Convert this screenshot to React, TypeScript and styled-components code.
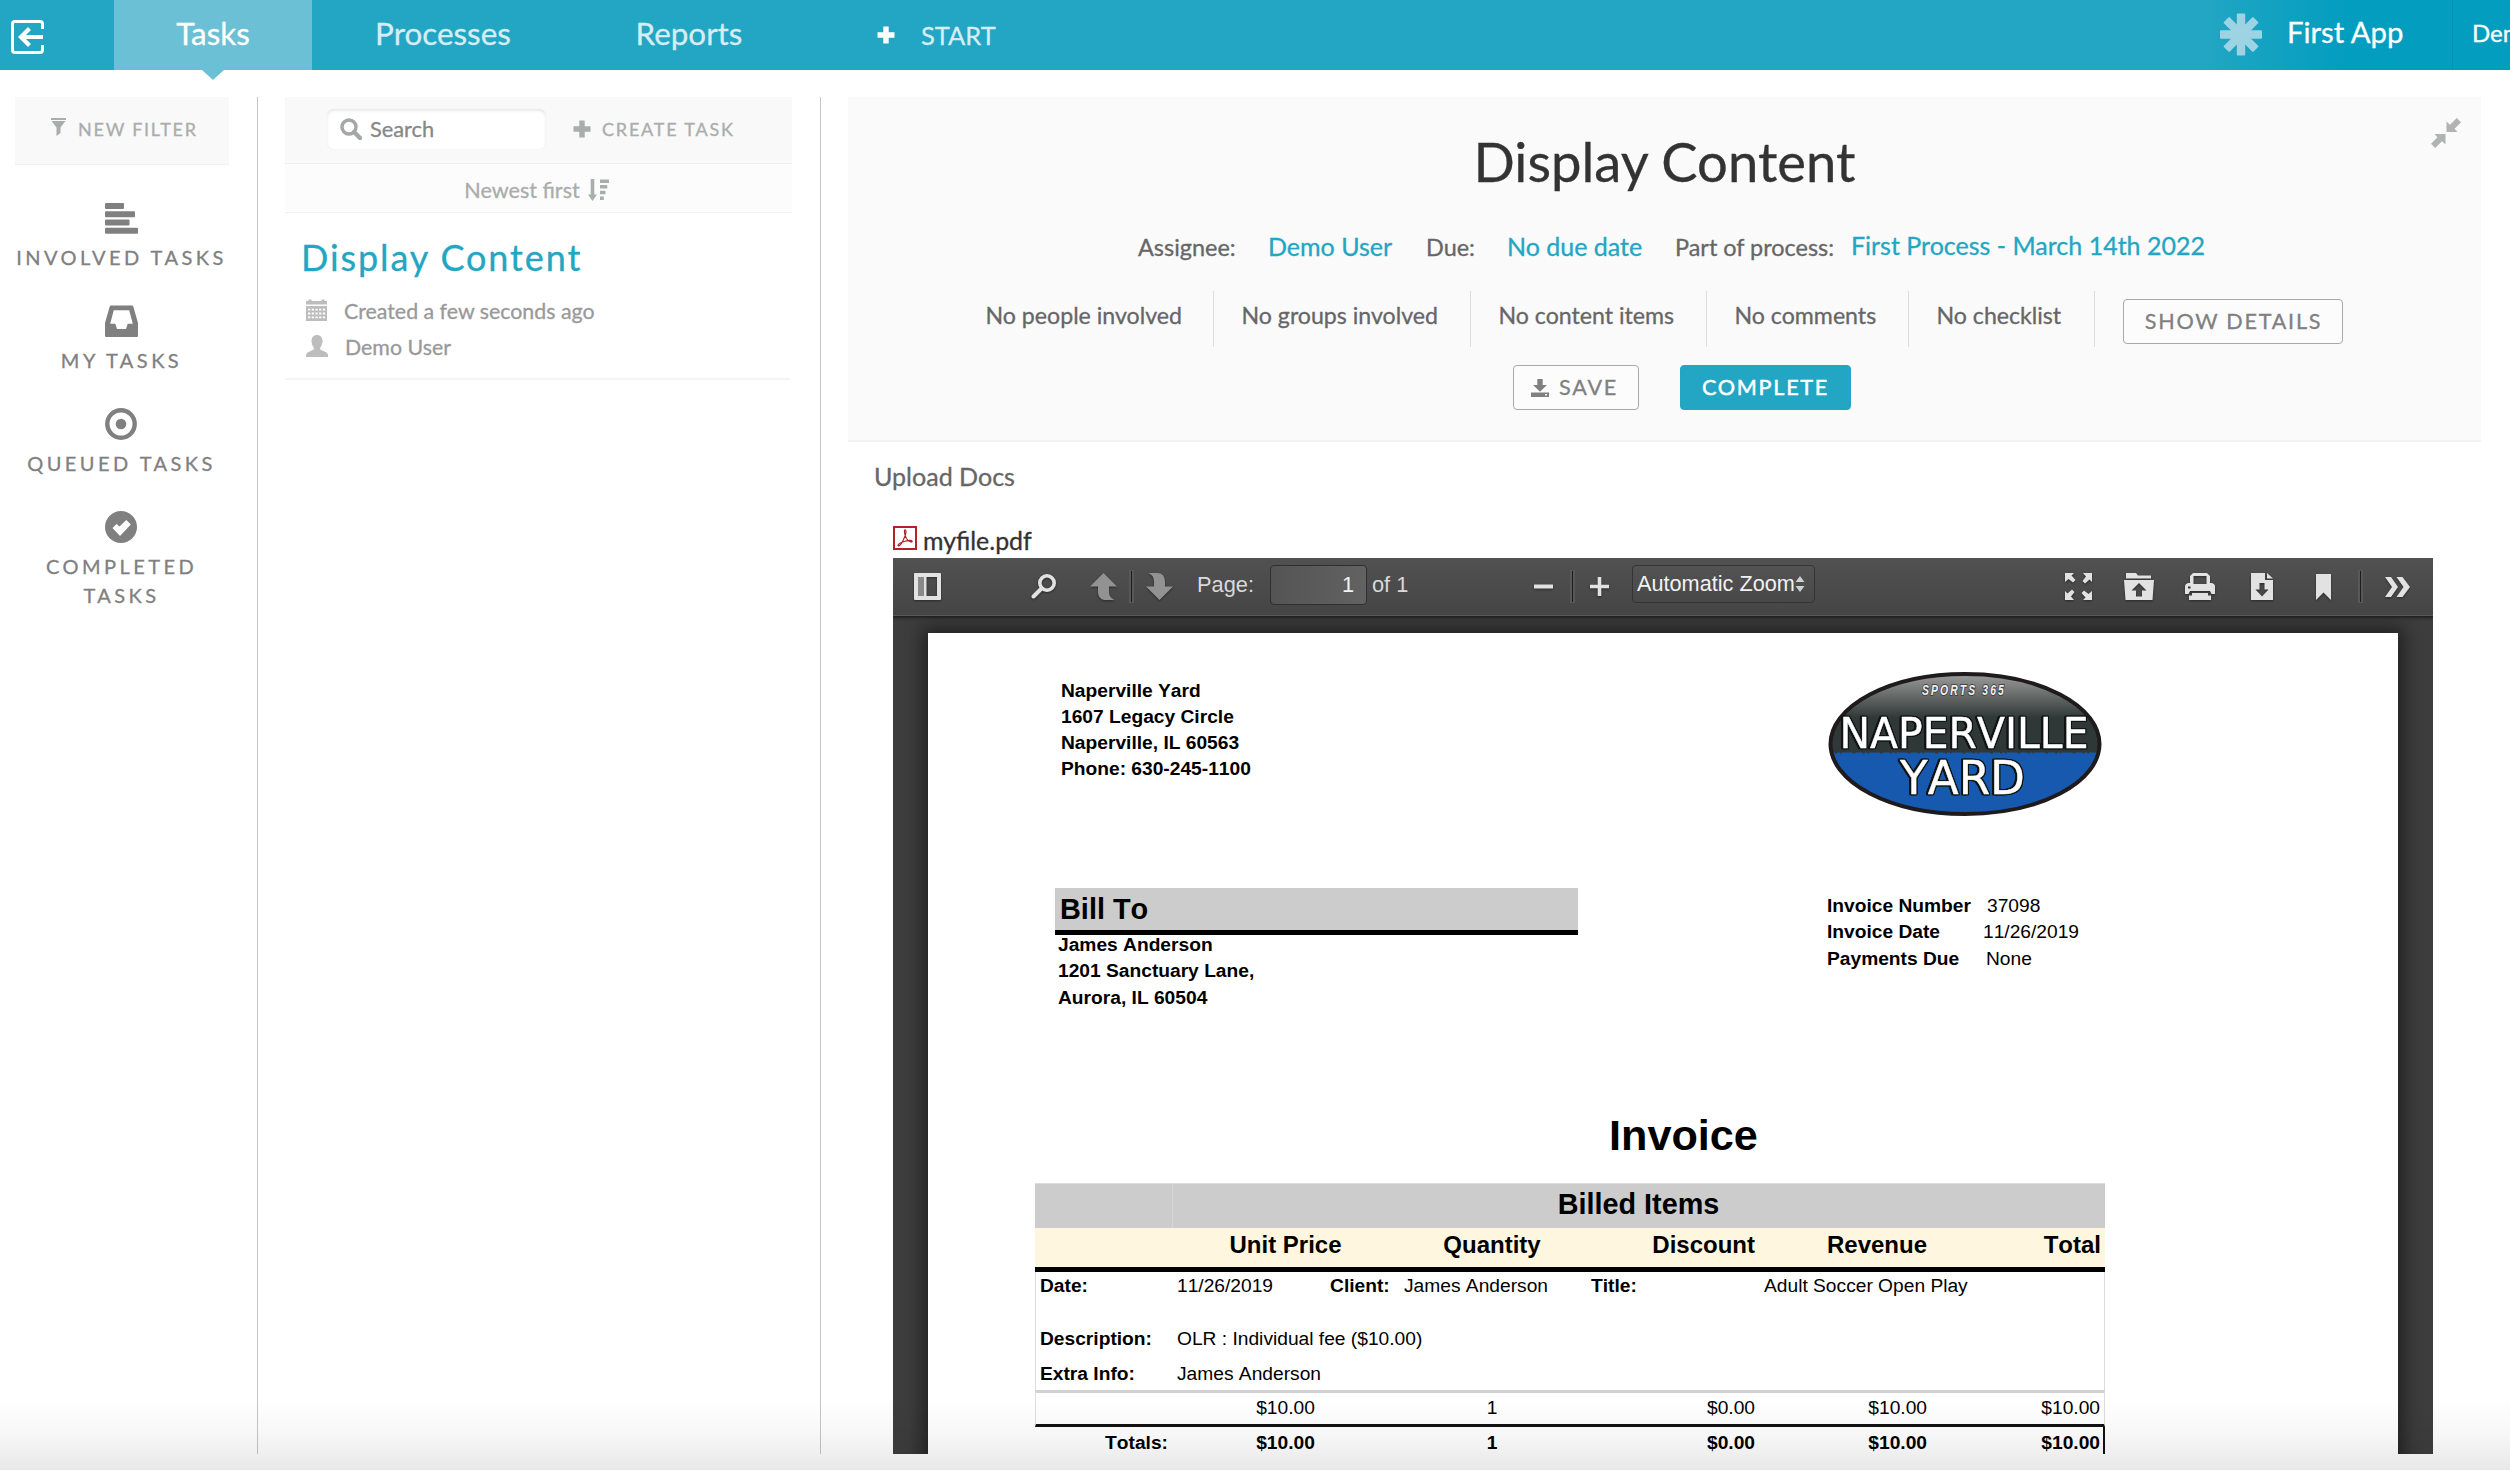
import React from 'react';
import styled, { createGlobalStyle, css } from 'styled-components';

const GlobalStyle = createGlobalStyle`
  *, *::before, *::after { box-sizing: border-box; }
  html, body { margin: 0; padding: 0; background: #fff; overflow: hidden; }
  body { font-family: Lato, "Open Sans", sans-serif; color: #333; }
`;

const teal = '#22a6c3';

const Screen = styled.div`
  position: relative;
  width: 2510px;
  height: 1470px;
  display: flex;
  flex-direction: column;
  overflow: hidden;
  -webkit-text-stroke: 0.3px currentColor;
`;

const BottomShade = styled.div`
  position: absolute;
  left: 0;
  right: 0;
  bottom: 0;
  height: 72px;
  pointer-events: none;
  background: linear-gradient(rgba(0, 0, 0, 0), rgba(0, 0, 0, 0.03) 50%, rgba(0, 0, 0, 0.09));
`;

/* ---------- top navigation ---------- */

const TopBar = styled.header`
  flex: none;
  height: 70px;
  display: flex;
  background: ${teal};
`;

const HomeLink = styled.a`
  width: 114px;
  padding: 20px 0 0 11px;
  color: #fff;
`;

const NavTab = styled.a<{ $width: number; $active?: boolean }>`
  position: relative;
  width: ${p => p.$width}px;
  height: 70px;
  line-height: 67px;
  text-align: center;
  font-size: 31.4px;
  color: ${p => (p.$active ? '#fff' : '#d5edf3')};
  background: ${p => (p.$active ? '#6bc0d5' : 'transparent')};
  ${p => p.$active && css`
    &::after {
      content: '';
      position: absolute;
      left: 50%;
      top: 100%;
      margin-left: -11px;
      border: 11px solid transparent;
      border-bottom: 0;
      border-top-color: #6bc0d5;
      border-top-width: 10px;
    }
  `}
`;

const StartLink = styled.a`
  display: flex;
  align-items: center;
  gap: 26px;
  margin-left: 73px;
  height: 70px;
  color: #fff;
  font-size: 25.5px;
  span { color: #d5edf3; }
`;

const AppBadge = styled.div`
  display: flex;
  align-items: center;
  margin-left: auto;
  width: 248px;
  padding: 0 0 2px 15px;
  background: linear-gradient(90deg, ${teal}, #039dc0 56%);
  border-right: 1px solid #0691b4;
`;

const AppName = styled.span`
  margin-left: 25px;
  font-size: 29.3px;
  line-height: 64px;
  height: 68px;
  color: #fff;
`;

const UserMenu = styled.div`
  width: 57px;
  padding-left: 19px;
  background: #039dc0;
  color: #fff;
  font-size: 24px;
  line-height: 66px;
  white-space: nowrap;
  overflow: hidden;
`;

/* ---------- columns ---------- */

const Columns = styled.div`
  height: 1384px;
  display: flex;
  padding-top: 27px;
`;

const FilterColumn = styled.nav`
  width: 258px;
  padding-left: 15px;
  border-right: 1.5px solid #c6c6c6;
`;

const NewFilter = styled.button`
  display: flex;
  align-items: center;
  width: 214px;
  height: 68px;
  padding: 0 0 4px 36px;
  border: 0;
  border-bottom: 1.5px solid #f0f0f0;
  background: #f9f9f9;
  font: 18px Lato, sans-serif;
  letter-spacing: 1.75px;
  color: #a9adac;
  svg { margin: -3px 12px 0 0; }
`;

const FilterList = styled.ul`
  list-style: none;
  margin: 0;
  padding: 37px 0 0;
  width: 212px;
`;

const FilterItem = styled.li`
  height: 103px;
  display: flex;
  flex-direction: column;
  align-items: center;
  color: #808080;
  svg { flex: none; height: 32px; }
`;

const FilterLabel = styled.span`
  margin-top: 9px;
  width: 220px;
  padding-left: 1px;
  text-align: center;
  font-size: 20px;
  line-height: 29px;
  letter-spacing: 3.45px;
`;

const TaskColumn = styled.section`
  width: 563px;
  padding-left: 27px;
  border-right: 1.5px solid #c6c6c6;
`;

const TaskTools = styled.div`
  display: flex;
  align-items: center;
  width: 507px;
  height: 67px;
  padding: 0 0 2px 42px;
  background: #f9f9f9;
  border-bottom: 1.5px solid #f0f0f0;
`;

const SearchBox = styled.label`
  display: flex;
  align-items: center;
  width: 219px;
  height: 40px;
  padding: 0 0 1px 13px;
  border-radius: 7px;
  background: #fff;
  box-shadow: inset 0 2px 3px rgba(0, 0, 0, 0.09), 0 0 1px rgba(0, 0, 0, 0.08);
  color: #a3a7a6;
`;

const SearchInput = styled.input`
  width: 150px;
  margin-left: 8px;
  padding: 0;
  border: 0;
  background: transparent;
  font: 21.8px Lato, sans-serif;
  &::placeholder { color: #888; opacity: 1; }
`;

const CreateTask = styled.button`
  display: flex;
  align-items: center;
  gap: 11px;
  margin-left: 27px;
  padding: 0;
  border: 0;
  background: none;
  font: 18px Lato, sans-serif;
  letter-spacing: 1.8px;
  color: #a9adac;
`;

const SortBar = styled.div`
  display: flex;
  align-items: center;
  justify-content: center;
  gap: 8px;
  width: 507px;
  height: 49px;
  padding: 3px 4px 0 0;
  background: #fcfcfc;
  border-bottom: 1.5px solid #f0f0f0;
  font-size: 21.6px;
  color: #a9adac;
`;

const TaskCard = styled.article`
  width: 505px;
  height: 167px;
  padding: 24px 0 0 16px;
  border-bottom: 2px solid #f4f4f4;
`;

const TaskTitle = styled.h3`
  margin: 0 0 16px;
  font-weight: 400;
  font-size: 36px;
  line-height: 40px;
  letter-spacing: 1.9px;
  color: ${teal};
`;

const TaskMeta = styled.p`
  display: flex;
  align-items: center;
  margin: 0;
  padding-left: 5px;
  height: 36px;
  font-size: 21.35px;
  color: #999;
  svg { color: #bdbdbd; margin: -3px 17px 0 0; }
`;

/* ---------- task detail ---------- */

const Detail = styled.main`
  flex: 1;
  padding-left: 27px;
`;

const DetailHeader = styled.div`
  position: relative;
  display: flex;
  flex-direction: column;
  align-items: center;
  width: 1633px;
  height: 345px;
  padding-top: 28px;
  background: #fafafa;
  border-bottom: 2px solid #f3f3f3;
`;

const CollapseButton = styled.span`
  position: absolute;
  top: 21px;
  right: 20px;
  color: #b0b3b2;
  display: flex;
`;

const DetailTitle = styled.h2`
  margin: 0;
  font-weight: 400;
  font-size: 54.4px;
  line-height: 72px;
  color: #333;
`;

const FactRow = styled.div`
  display: flex;
  margin-top: 32px;
  margin-left: 12px;
  width: 1065px;
  height: 36px;
`;

const FactLabel = styled.span<{ $width: number }>`
  width: ${p => p.$width}px;
  font-size: 23.45px;
  line-height: 37px;
  color: #666;
  white-space: nowrap;
`;

const FactLink = styled.a<{ $width: number; $raise?: number }>`
  width: ${p => p.$width}px;
  font-size: 25px;
  line-height: ${p => 35 - (p.$raise ?? 0)}px;
  color: ${teal};
  white-space: nowrap;
`;

const StatRow = styled.div`
  display: flex;
  margin-top: 26px;
  margin-left: -28px;
  height: 56px;
`;

const Stat = styled.span<{ $width: number }>`
  width: ${p => p.$width}px;
  padding-left: 27.5px;
  border-right: 1.5px solid #dcdcdc;
  font-size: 23.15px;
  line-height: 49px;
  color: #666;
  white-space: nowrap;
`;

const Button = styled.button<{ $primary?: boolean; $width: number }>`
  display: flex;
  align-items: center;
  justify-content: center;
  width: ${p => p.$width}px;
  height: 45px;
  padding: 0 0 1px 1px;
  border: 1.5px solid ${p => (p.$primary ? teal : '#a9a9a9')};
  border-radius: 4px;
  background: ${p => (p.$primary ? teal : '#fcfcfc')};
  color: ${p => (p.$primary ? '#fff' : '#808080')};
  font: 21.6px Lato, sans-serif;
  letter-spacing: 1.75px;
  -webkit-text-stroke: ${p => (p.$primary ? '0.5px #fff' : '0.3px #808080')};
  svg { margin: 1px 10px 0 -3px; }
`;

const DetailsButton = styled(Button)`
  margin: 8px 0 0 28px;
`;

const ActionRow = styled.div`
  display: flex;
  gap: 41px;
  margin-top: 18px;
  margin-left: 34px;
`;

const FieldLabel = styled.div`
  padding: 16px 0 0 26px;
  font-size: 25.05px;
  line-height: 36px;
  color: #666;
`;

const FileLink = styled.a`
  display: flex;
  align-items: center;
  gap: 6px;
  height: 32px;
  margin: 32px 0 0 45px;
  font-size: 24.9px;
  line-height: 28px;
  color: #333;
  padding-bottom: 5px;
  svg { margin-top: -4px; }
`;

/* ---------- document viewer ---------- */

const Viewer = styled.section`
  width: 1540px;
  height: 896px;
  margin: 0 0 0 45px;
  overflow: hidden;
  background: #3d3d3d;
  font-family: "Liberation Sans", Arial, sans-serif;
  -webkit-text-stroke: 0;
`;

const ViewerBar = styled.div`
  position: relative;
  display: flex;
  align-items: center;
  height: 58px;
  padding: 0 23px 0 21px;
  background: linear-gradient(#515151, #454545);
  border-bottom: 1px solid #585858;
  box-shadow: 0 1px 1px #222, 0 2px 3px rgba(0, 0, 0, 0.4);
  color: #ddd;
`;

const Slot = styled.span<{ $width: number; $dim?: boolean }>`
  display: flex;
  width: ${p => p.$width}px;
  color: ${p => (p.$dim ? '#929292' : '#e2e2e2')};
  svg { filter: drop-shadow(0 1px 1px rgba(0, 0, 0, 0.45)); }
`;

const Separator = styled.i<{ $after: number }>`
  width: 5px;
  height: 33px;
  margin-right: ${p => p.$after}px;
  border: solid #585858;
  border-width: 1px 2px;
  background: #1c1c1c;
`;

const BarText = styled.span<{ $width: number }>`
  width: ${p => p.$width}px;
  font-size: 21.8px;
  line-height: 30px;
  padding-bottom: 3px;
  color: #d9d9d9;
  white-space: nowrap;
`;

const PageInput = styled.input`
  width: 97px;
  height: 40px;
  margin: -3px 5px 0 0;
  padding: 0 12px 0 0;
  border: 1.5px solid #2f2f2f;
  border-radius: 4px;
  background: linear-gradient(90deg, #545454, #626262);
  font: 21.8px "Liberation Sans", Arial, sans-serif;
  text-align: right;
  color: #f2f2f2;
`;

const ZoomSelect = styled.div`
  display: flex;
  align-items: center;
  width: 183px;
  height: 38px;
  margin: -5px 0 0 0;
  padding: 0 0 0 4px;
  border: 1.5px solid #343434;
  border-radius: 4px;
  background: linear-gradient(#535353, #484848);
  font-size: 21.7px;
  color: #f2f2f2;
  white-space: nowrap;
`;

const RightTools = styled.div`
  display: flex;
  align-items: center;
  margin-left: auto;
`;

const Sheet = styled.div`
  width: 1470px;
  height: 840px;
  margin: 17px 0 0 35px;
  padding: 38px 0 0 107px;
  background: #fff;
  box-shadow: 0 0 16px 6px rgba(0, 0, 0, 0.45);
  color: #000;
  font-size: 19.2px;
  font-kerning: none;
`;

const SheetTop = styled.div`
  display: flex;
  height: 217px;
  svg { margin-top: 1px; }
`;

const Sender = styled.address`
  width: 793px;
  padding: 7px 0 0 26px;
  font-style: normal;
  font-weight: 700;
  line-height: 26.1px;
`;

const Parties = styled.div`
  display: flex;
  height: 221px;
`;

const BillTo = styled.div`
  width: 523px;
  margin: 0 249px 0 20px;
  font-weight: 700;
  line-height: 26.4px;
`;

const BillHeading = styled.h4`
  margin: 0 0 -3px;
  height: 47px;
  padding-left: 5px;
  font-size: 28.9px;
  line-height: 42px;
  background: #ccc;
  border-bottom: 5px solid #000;
`;

const BillLine = styled.div`
  padding-left: 3px;
`;

const InvoiceFacts = styled.div`
  padding-top: 4.5px;
  line-height: 26.7px;
`;

const InvoiceFact = styled.div<{ $gap: number }>`
  display: flex;
  b { width: ${p => p.$gap}px; }
`;

const InvoiceTitle = styled.h1`
  margin: 0;
  width: 1297px;
  height: 74px;
  text-align: center;
  font-size: 43.2px;
  line-height: 53px;
`;

const Table = styled.div`
  width: 1070px;
`;

const BilledHead = styled.div`
  height: 45px;
  display: flex;
  background: #ccc;
  border-top: 1.5px solid #ddd;
  font-size: 28.8px;
  font-weight: 700;
  line-height: 41px;
  text-align: center;
`;

const BilledSpacer = styled.span`
  width: 138px;
  border-right: 1.5px solid #d6d6d6;
`;

const BilledTitle = styled.span`
  width: 931px;
`;

const grid = css`
  display: grid;
  grid-template-columns: 137px 227px 186px 174px 172px 174px;
`;

const ColumnHead = styled.div`
  ${grid}
  height: 44px;
  background: #fff6df;
  border-bottom: 5px solid #000;
  font-size: 24px;
  font-weight: 700;
  line-height: 33px;
`;

const Cell = styled.span<{ $align?: 'center' | 'right' | 'left'; $pad?: number }>`
  text-align: ${p => p.$align ?? 'left'};
  padding: 0 ${p => (p.$align === 'right' ? p.$pad ?? 4 : 0)}px 0 ${p => (p.$align ? 0 : p.$pad ?? 5)}px;
  white-space: nowrap;
`;

const ClientLabel = styled.b`
  margin-left: 57px;
`;

const DetailsBlock = styled.div`
  border: 1.5px solid #dcdcdc;
  border-width: 0 1.5px;
`;

const DetailLine = styled.div<{ $height: number }>`
  ${grid}
  height: ${p => p.$height}px;
  margin: 0 -1px;
  line-height: 27px;
`;

const AmountRow = styled.div`
  ${grid}
  grid-template-columns: 136px 227px 186px 174px 172px 173px;
  height: 37px;
  border: solid #dcdcdc;
  border-width: 0 1px 3px;
  border-bottom-color: #111;
  border-top: 3px solid #d2d2d2;
  line-height: 30px;
`;

const TotalRow = styled.div`
  ${grid}
  height: 40px;
  border-right: 2px solid #111;
  line-height: 32px;
  font-weight: 700;
`;

/* ---------- icons ---------- */

type IconProps = { w: number; h: number; box: string; children: React.ReactNode };
const Icon = ({ w, h, box, children }: IconProps) => (
  <svg width={w} height={h} viewBox={box} fill="currentColor" preserveAspectRatio="none">{children}</svg>
);

const HomeIcon = () => (
  <Icon w={33} h={34} box="0 0 33 34">
    <path d="M31.500 9V4Q31.500 1.500 29 1.500H4Q1.500 1.500 1.500 4V30Q1.500 32.500 4 32.500H29Q31.500 32.500 31.500 30V25" fill="none" stroke="#fff" strokeWidth="3" />
    <path d="M32 17H12M18.500 8.500L10 17L18.500 25.500" fill="none" stroke="#fff" strokeWidth="4.200" />
  </Icon>
);
const PlusIcon = ({ size }: { size: number }) => (
  <Icon w={size} h={size} box="0 0 18 18"><path d="M6.300 0.500h5.400v5.800h5.800v5.400h-5.800v5.800H6.300v-5.800H0.500V6.300h5.800z" /></Icon>
);
const Asterisk = () => (
  <Icon w={42} h={43} box="-21 -21.500 42 43">
    <g fill="#9dd3e2">
      {[0, 45, 90, 135].map(a => <rect key={a} x="-4.200" y="-21" width="8.400" height="42" rx="1" transform={`rotate(${a})`} />)}
    </g>
  </Icon>
);
const Funnel = () => (
  <Icon w={15} h={18} box="0 0 15 18"><path d="M0 0h15v2H0zM0.500 3h14L9.500 9.500V15L5.500 18V9.500z" /></Icon>
);
const BarsIcon = () => (
  <Icon w={33} h={32} box="0 0 33 32">
    <rect y="1" width="19" height="6" rx="1" /><rect y="9.300" width="30" height="6" rx="1" />
    <rect y="17.500" width="24.500" height="6" rx="1" /><rect y="25.700" width="33" height="6" rx="1" />
  </Icon>
);
const InboxIcon = () => (
  <Icon w={33} h={32} box="0 0 33 34">
    <path fillRule="evenodd" d="M6 0.500H27Q28 0.500 28.300 1.500L33 19V33Q33 34 32 34H1Q0 34 0 33V19L4.700 1.500Q5 0.500 6 0.500zM8.800 5.500L5.200 20H10.300L12 25.500H21L22.700 20H27.800L24.200 5.500z" />
  </Icon>
);
const TargetIcon = () => (
  <Icon w={32} h={32} box="0 0 32 32">
    <circle cx="16" cy="16" r="13.700" fill="none" stroke="currentColor" strokeWidth="4.400" /><circle cx="16" cy="16" r="5.300" />
  </Icon>
);
const CheckIcon = () => (
  <Icon w={32} h={32} box="0 0 32 32">
    <circle cx="16" cy="16" r="16" />
    <path fill="#fff" d="M7.500 17L11.500 13L14.500 15.500L21.300 9L25.800 13.600L15 25z" />
  </Icon>
);
const Magnifier = () => (
  <Icon w={22} h={22} box="0 0 22 22">
    <circle cx="9" cy="9" r="7" fill="none" stroke="currentColor" strokeWidth="3.400" />
    <path d="M14 14L20 20" stroke="currentColor" strokeWidth="4.400" strokeLinecap="round" />
  </Icon>
);
const SortIcon = () => (
  <Icon w={21} h={22} box="0 0 21 22">
    <path d="M2.700 0h3.600v15.500H9L4.500 22L0 15.500h2.700zM12 0.500h9v3.400h-9zM12 6h7.300v3.400H12zM12 11.800h5.500v3.400H12zM12 17.500h3.800v3.400H12z" />
  </Icon>
);
const Calendar = () => (
  <Icon w={21} h={22} box="0 0 21 22">
    <path fillRule="evenodd" d="M0 2h2.500V0.500h3V2h10V0.500h3V2H21v3.400H0zM0 7h21v15H0zM2 9.800v1.800h2.300v-1.800zM5.700 9.800v1.800h2.300v-1.800zM9.400 9.800v1.800h2.300v-1.800zM13.100 9.800v1.800h2.300v-1.800zM16.800 9.800v1.800h2.300v-1.800zM2 13.600v1.800h2.300v-1.800zM5.700 13.600v1.800h2.300v-1.800zM9.400 13.600v1.800h2.300v-1.800zM13.100 13.600v1.800h2.300v-1.800zM16.800 13.600v1.800h2.300v-1.800zM2 17.400v1.800h2.300v-1.800zM5.700 17.400v1.800h2.300v-1.800zM9.400 17.400v1.800h2.300v-1.800zM13.100 17.400v1.800h2.300v-1.800zM16.800 17.400v1.800h2.300v-1.800z" />
  </Icon>
);
const Person = () => (
  <Icon w={22} h={22} box="0 0 22 22">
    <path d="M11 0C14.500 0 16.500 2.600 16.500 6C16.500 8.500 15.500 11 14.200 12.500V14.500L20.500 17.500Q22 18.500 22 20V22H0V20Q0 18.500 1.500 17.500L7.800 14.500V12.500C6.500 11 5.500 8.500 5.500 6C5.500 2.600 7.500 0 11 0z" />
  </Icon>
);
const Collapse = () => (
  <Icon w={30} h={30} box="0 0 30 30">
    <path d="M25.800 0L30 4.200L23.500 10.700L26.500 14H15.500V3.500L19 6.800zM4.200 30L0 25.800L6.500 19.300L3.500 16H14.500V26.500L11 23.200z" />
  </Icon>
);
const SaveIcon = () => (
  <Icon w={18} h={18} box="0 0 18 18">
    <path fillRule="evenodd" d="M6.300 0h5.400v6H16L9 12.800L2 6h4.300zM0 13.500h18V18H0zM14 15v1.500h2V15z" />
  </Icon>
);
const PdfIcon = () => (
  <svg width="24" height="24" viewBox="0 0 24 24" fill="none" stroke="#b5202a">
    <rect x="1" y="1" width="22" height="22" strokeWidth="2" />
    <path strokeWidth="1.200" d="M11.800 3.800C13.400 3.600 13.200 7 12 10C10.500 14 7.500 19.500 5.500 20C4 19.500 6 17.300 9 16.300C13 14.800 18.500 13.700 19.200 15.200C19.500 17 15.500 15.500 13.500 12.500C12 10 10.800 5 11.800 3.800z" />
  </svg>
);
const SidebarIcon = () => (
  <Icon w={27} h={27} box="0 0 27 27">
    <path fillRule="evenodd" d="M1 0H26Q27 0 27 1V26Q27 27 26 27H1Q0 27 0 26V1Q0 0 1 0zM12.500 4V23H23V4zM4 4V23H10V4z" />
    <rect x="4" y="4" width="6" height="19" fill="#8a8a8a" />
  </Icon>
);
const FindIcon = () => (
  <Icon w={25} h={25} box="0 0 25 25">
    <circle cx="16" cy="9" r="7.200" fill="none" stroke="currentColor" strokeWidth="3.600" />
    <path d="M10.500 14.500L2.500 22.500" stroke="currentColor" strokeWidth="4" strokeLinecap="round" />
  </Icon>
);
const PageUp = () => (
  <Icon w={27} h={27} box="0 0 27 27"><path d="M13.500 0L27 13.500H19V19Q19 24.500 24.500 27H14Q8 25.500 8 19V13.500H0z" /></Icon>
);
const PageDown = () => (
  <Icon w={27} h={27} box="0 0 27 27"><path d="M13.500 27L27 13.500H19V9Q19 0.500 12 0H2.500Q8 2.500 8 8V13.500H0z" /></Icon>
);
const ZoomOutIcon = () => <Icon w={19} h={19} box="0 0 19 19"><rect y="7.500" width="19" height="4" /></Icon>;
const ZoomInIcon = () => <Icon w={19} h={19} box="0 0 19 19"><path d="M7.700 0h3.600v7.700H19v3.600h-7.700V19H7.700v-7.700H0V7.700h7.700z" /></Icon>;
const SelectArrows = () => <Icon w={10} h={16} box="0 0 10 16"><path d="M5 0L9.500 6H0.500zM5 16L9.500 10H0.500z" fill="#cfcfcf" /></Icon>;
const FullscreenIcon = () => (
  <Icon w={27} h={27} box="0 0 27 27">
    {[0, 90, 180, 270].map(a => (
      <path key={a} transform={`rotate(${a} 13.500 13.500)`} d="M0 0H9L6.500 2.500L10.500 7L8 9.500L3.500 6L0 9z" />
    ))}
  </Icon>
);
const OpenIcon = () => (
  <Icon w={30} h={27} box="0 0 30 27">
    <path fillRule="evenodd" d="M2 0H12L14 2.500H27V5.500H2zM0 7H30L28.500 27H1.500zM15 10L7.500 17.500H12V23.500H18V17.500H22.500z" />
  </Icon>
);
const PrintIcon = () => (
  <Icon w={30} h={27} box="0 0 30 27">
    <path fillRule="evenodd" d="M8 0H22L25 3V10H27Q30 11 30 13V21H26.500L25 18H5L3.500 21H0V13Q0 11 3 10H5V3zM8.500 3V11H21.500V3zM3 13.500V15.500H5.500V13.500z" />
    <path d="M7 20H23V22.500H26V27H4V22.500H7z" />
  </Icon>
);
const DownloadIcon = () => (
  <Icon w={22} h={27} box="0 0 22 27">
    <path fillRule="evenodd" d="M0 0H14V7H22V27H0zM8.500 10V16.500H4.500L11 23.500L17.500 16.500H13.500V10zM16 0L22 5.500H16z" />
  </Icon>
);
const BookmarkIcon = () => <Icon w={15} h={26} box="0 0 15 26"><path d="M0 0H15V26L7.500 18.500L0 26z" /></Icon>;
const MoreIcon = () => (
  <Icon w={25} h={20} box="0 0 25 20"><path d="M0 0H6L13 10L6 20H0L7 10zM11.500 0H17.500L25 10L17.500 20H11.500L18.500 10z" /></Icon>
);

const LogoLetters = styled.g`
  font-family: "DejaVu Sans", sans-serif;
  fill: #fff;
  stroke: #fff;
  stroke-width: 0.4px;
  stroke-linejoin: round;
  filter: drop-shadow(1.2px 0 0 #101414) drop-shadow(-1.2px 0 0 #101414) drop-shadow(0 1px 0 #101414) drop-shadow(0 -1px 0 #101414);
`;

const LogoTagline = styled.text`
  font: italic 700 14.5px "Liberation Sans Narrow", "Liberation Sans", sans-serif;
  letter-spacing: 3px;
  fill: #eee;
  stroke: #444;
  stroke-width: 2px;
  paint-order: stroke;
`;

const YardLogo = () => (
  <svg width="274" height="144" viewBox="0 0 274 144">
    <defs>
      <linearGradient id="dome" x1="0" y1="0" x2="0" y2="1">
        <stop offset="0" stopColor="#a0a0a0" />
        <stop offset="0.320" stopColor="#2f3836" />
        <stop offset="1" stopColor="#2f3836" />
      </linearGradient>
      <clipPath id="oval"><ellipse cx="137" cy="72" rx="134" ry="69.500" /></clipPath>
    </defs>
    <g clipPath="url(#oval)">
      <rect width="274" height="144" fill="url(#dome)" />
      <rect y="81.500" width="274" height="63" fill="#1759ae" />
      <path d="M0 81.500H274" stroke="#1759ae" strokeWidth="2" strokeDasharray="7 2 3 1.500 11 3" />
    </g>
    <ellipse cx="137" cy="72" rx="134.500" ry="70" fill="none" stroke="#1f1a1c" strokeWidth="4" />
    <LogoTagline x="94" y="22.500" textLength="84" lengthAdjust="spacingAndGlyphs">SPORTS 365</LogoTagline>
    <LogoLetters>
      <text x="11.500" y="75.500" fontSize="42" textLength="249" lengthAdjust="spacingAndGlyphs">NAPERVILLE</text>
    </LogoLetters>
    <LogoLetters>
      <text x="72" y="121.500" fontSize="45.500" textLength="125" lengthAdjust="spacingAndGlyphs">YARD</text>
    </LogoLetters>
  </svg>
);

const filters = [
  { icon: <BarsIcon />, label: 'INVOLVED TASKS' },
  { icon: <InboxIcon />, label: 'MY TASKS' },
  { icon: <TargetIcon />, label: 'QUEUED TASKS' },
  { icon: <CheckIcon />, label: 'COMPLETED TASKS' },
];

export default function App() {
  return (
    <Screen>
      <GlobalStyle />
      <TopBar>
        <HomeLink><HomeIcon /></HomeLink>
        <NavTab $width={198} $active>Tasks</NavTab>
        <NavTab $width={262}>Processes</NavTab>
        <NavTab $width={230}>Reports</NavTab>
        <StartLink><PlusIcon size={18} /><span>START</span></StartLink>
        <AppBadge><Asterisk /><AppName>First App</AppName></AppBadge>
        <UserMenu>Demo User</UserMenu>
      </TopBar>

      <Columns>
        <FilterColumn>
          <NewFilter><Funnel />NEW FILTER</NewFilter>
          <FilterList>
            {filters.map(f => (
              <FilterItem key={f.label}>{f.icon}<FilterLabel>{f.label}</FilterLabel></FilterItem>
            ))}
          </FilterList>
        </FilterColumn>

        <TaskColumn>
          <TaskTools>
            <SearchBox><Magnifier /><SearchInput placeholder="Search" /></SearchBox>
            <CreateTask><PlusIcon size={18} />CREATE TASK</CreateTask>
          </TaskTools>
          <SortBar>Newest first<SortIcon /></SortBar>
          <TaskCard>
            <TaskTitle>Display Content</TaskTitle>
            <TaskMeta><Calendar /><span>Created a few seconds ago</span></TaskMeta>
            <TaskMeta><Person /><span>Demo User</span></TaskMeta>
          </TaskCard>
        </TaskColumn>

        <Detail>
          <DetailHeader>
            <CollapseButton><Collapse /></CollapseButton>
            <DetailTitle>Display Content</DetailTitle>
            <FactRow>
              <FactLabel $width={130}>Assignee:</FactLabel>
              <FactLink $width={158}>Demo User</FactLink>
              <FactLabel $width={81}>Due:</FactLabel>
              <FactLink $width={168}>No due date</FactLink>
              <FactLabel $width={176}>Part of process:</FactLabel>
              <FactLink $width={352} $raise={2}>First Process - March 14th 2022</FactLink>
            </FactRow>
            <StatRow>
              <Stat $width={256}>No people involved</Stat>
              <Stat $width={257}>No groups involved</Stat>
              <Stat $width={236}>No content items</Stat>
              <Stat $width={202}>No comments</Stat>
              <Stat $width={186}>No checklist</Stat>
              <DetailsButton $width={220}>SHOW DETAILS</DetailsButton>
            </StatRow>
            <ActionRow>
              <Button $width={126}><SaveIcon />SAVE</Button>
              <Button $width={171} $primary>COMPLETE</Button>
            </ActionRow>
          </DetailHeader>

          <FieldLabel>Upload Docs</FieldLabel>
          <FileLink><PdfIcon />myfile.pdf</FileLink>

          <Viewer>
            <ViewerBar>
              <Slot $width={117}><SidebarIcon /></Slot>
              <Slot $width={59}><FindIcon /></Slot>
              <Slot $width={39} $dim><PageUp /></Slot>
              <Separator $after={12} />
              <Slot $width={51} $dim><PageDown /></Slot>
              <BarText $width={73}>Page:</BarText>
              <PageInput defaultValue="1" />
              <BarText $width={162}>of 1</BarText>
              <Slot $width={36}><ZoomOutIcon /></Slot>
              <Separator $after={15} />
              <Slot $width={42}><ZoomInIcon /></Slot>
              <ZoomSelect>Automatic Zoom<SelectArrows /></ZoomSelect>
              <RightTools>
                <Slot $width={59}><FullscreenIcon /></Slot>
                <Slot $width={61}><OpenIcon /></Slot>
                <Slot $width={66}><PrintIcon /></Slot>
                <Slot $width={65}><DownloadIcon /></Slot>
                <Slot $width={42}><BookmarkIcon /></Slot>
                <Separator $after={22} />
                <Slot $width={25}><MoreIcon /></Slot>
              </RightTools>
            </ViewerBar>

            <Sheet>
              <SheetTop>
                <Sender>
                  Naperville Yard<br />1607 Legacy Circle<br />Naperville, IL 60563<br />Phone: 630-245-1100
                </Sender>
                <YardLogo />
              </SheetTop>
              <Parties>
                <BillTo>
                  <BillHeading>Bill To</BillHeading>
                  <BillLine>James Anderson</BillLine>
                  <BillLine>1201 Sanctuary Lane,</BillLine>
                  <BillLine>Aurora, IL 60504</BillLine>
                </BillTo>
                <InvoiceFacts>
                  <InvoiceFact $gap={160}><b>Invoice Number</b>37098</InvoiceFact>
                  <InvoiceFact $gap={156}><b>Invoice Date</b>11/26/2019</InvoiceFact>
                  <InvoiceFact $gap={159}><b>Payments Due</b>None</InvoiceFact>
                </InvoiceFacts>
              </Parties>
              <InvoiceTitle>Invoice</InvoiceTitle>
              <Table>
                <BilledHead><BilledSpacer /><BilledTitle>Billed Items</BilledTitle></BilledHead>
                <ColumnHead>
                  <Cell />
                  <Cell $align="center">Unit Price</Cell>
                  <Cell $align="center">Quantity</Cell>
                  <Cell $align="right">Discount</Cell>
                  <Cell $align="right">Revenue</Cell>
                  <Cell $align="right">Total</Cell>
                </ColumnHead>
                <DetailsBlock>
                  <DetailLine $height={53}>
                    <Cell><b>Date:</b></Cell>
                    <Cell>11/26/2019<ClientLabel>Client:</ClientLabel></Cell>
                    <Cell>James Anderson</Cell>
                    <Cell $pad={6}><b>Title:</b></Cell>
                    <Cell>Adult Soccer Open Play</Cell>
                  </DetailLine>
                  <DetailLine $height={35}>
                    <Cell><b>Description:</b></Cell>
                    <Cell>OLR : Individual fee ($10.00)</Cell>
                  </DetailLine>
                  <DetailLine $height={30}>
                    <Cell><b>Extra Info:</b></Cell>
                    <Cell>James Anderson</Cell>
                  </DetailLine>
                </DetailsBlock>
                <AmountRow>
                  <Cell />
                  <Cell $align="center">$10.00</Cell>
                  <Cell $align="center">1</Cell>
                  <Cell $align="right">$0.00</Cell>
                  <Cell $align="right">$10.00</Cell>
                  <Cell $align="right">$10.00</Cell>
                </AmountRow>
                <TotalRow>
                  <Cell $align="right">Totals:</Cell>
                  <Cell $align="center">$10.00</Cell>
                  <Cell $align="center">1</Cell>
                  <Cell $align="right">$0.00</Cell>
                  <Cell $align="right">$10.00</Cell>
                  <Cell $align="right" $pad={5}>$10.00</Cell>
                </TotalRow>
              </Table>
            </Sheet>
          </Viewer>
        </Detail>
      </Columns>
      <BottomShade />
    </Screen>
  );
}
